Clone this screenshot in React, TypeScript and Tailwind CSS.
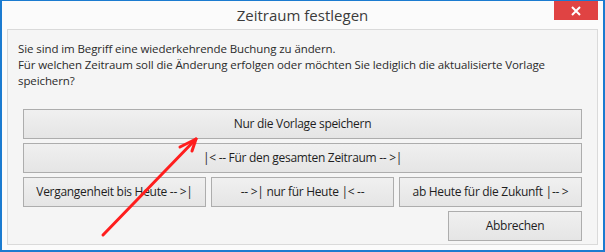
const font = { fontFamily: '"Open Sans", "Noto Sans", sans-serif' };

function DlgButton({ label, className = "" }: { label: string; className?: string }) {
  return (
    <button
      className={`flex h-[30px] items-center justify-center border border-[#adadad] bg-gradient-to-b from-[#f0f0f0] to-[#e5e5e5] text-[12px] tracking-[-0.3px] text-[#1e1e1e] ${className}`}
    >
      {label}
    </button>
  );
}

export default function App() {
  return (
    <div
      className="relative flex h-[252px] w-[605px] flex-col border-x-2 border-b-2 border-t border-[#1b7bd0] bg-[#fbfbfb] px-[5px] pb-[5px]"
      style={font}
    >
      <div className="relative flex h-[28px] shrink-0 items-center justify-center">
        <span className="text-[15px] text-[#3c3c3c]">Zeitraum festlegen</span>
        <button className="absolute right-0 top-0 flex h-[19px] w-[44px] items-center justify-center bg-[#e04343]">
          <svg width="10" height="10" viewBox="0 0 10 10">
            <path d="M1 1 L9 9 M9 1 L1 9" stroke="white" strokeWidth="2" />
          </svg>
        </button>
      </div>

      <div className="flex flex-1 flex-col border border-[#dadada] bg-[#f5f5f5] px-[10px] pb-[2px] pt-[11px]">
        <p className="text-[11.5px] leading-[16px] tracking-[-0.1px] text-[#2b2b2b]">
          Sie sind im Begriff eine wiederkehrende Buchung zu ändern.
          <br />
          Für welchen Zeitraum soll die Änderung erfolgen oder möchten Sie lediglich die aktualisierte Vorlage speichern?
        </p>

        <div className="mx-[5px] mt-[20px] flex flex-col gap-[4px]">
          <DlgButton label="Nur die Vorlage speichern" />
          <DlgButton label="|< -- Für den gesamten Zeitraum -- >|" />
          <div className="grid grid-cols-3 gap-[5px]">
            <DlgButton label="Vergangenheit bis Heute -- >|" />
            <DlgButton label="-- >| nur für Heute |< --" />
            <DlgButton label="ab Heute für die Zukunft |-- >" />
          </div>
          <div className="flex justify-end">
            <DlgButton label="Abbrechen" className="w-[134px]" />
          </div>
        </div>
      </div>

      <svg className="pointer-events-none absolute left-[-2px] top-[-1px]" width="605" height="252">
        <g stroke="#ff1e1e" strokeWidth="3" strokeLinecap="round" fill="none">
          <line x1="103" y1="235" x2="195" y2="140" />
          <line x1="196" y1="139" x2="180" y2="147" />
          <line x1="196" y1="139" x2="192" y2="151" />
        </g>
      </svg>
    </div>
  );
}
